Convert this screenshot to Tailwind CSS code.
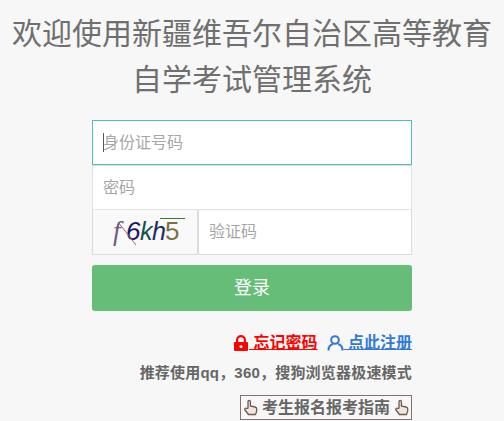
<!DOCTYPE html>
<html lang="zh-CN">
<head>
  <meta charset="UTF-8" />
  <title>新疆维吾尔自治区高等教育自学考试管理系统</title>
  <script src="https://cdn.jsdelivr.net/npm/@tailwindcss/browser@4"></script>
</head>
<body class="bg-[#f7f7f7] h-[421px] overflow-hidden font-['Liberation_Sans','Noto_Sans_CJK_SC',sans-serif] text-[#676a6c]">
  <h1 class="pt-[11px] text-center text-[30px] leading-[46px] font-normal text-[#6f6f6f]">欢迎使用新疆维吾尔自治区高等教育<br>自学考试管理系统</h1>
  <form class="w-[320px] ml-[92px] mt-[17px]">
    <div class="h-[45px] border border-[#4fc0b8] bg-white flex items-center px-[10px] text-base text-[#a6a6a6]">
      <span class="w-px h-[19px] bg-[#555] -mr-px"></span>身份证号码
    </div>
    <div class="h-[45px] border border-[#e2e2e2] border-t-[#dedede] bg-white flex items-center px-[10px] text-base text-[#a6a6a6]">密码</div>
    <div class="h-[45px] flex border border-[#dcdcdc] border-t-0">
      <div class="w-[106px] bg-[#f9f9f9] border-r-2 border-[#dcdcdc]">
        <svg width="104" height="44" viewBox="0 0 104 44">
          <text x="20" y="30" font-family="Liberation Serif" font-style="italic" font-size="27" fill="#6d5a82">f</text>
          <text x="33" y="30" font-family="Liberation Sans" font-style="italic" font-size="26" fill="#1c1566">6</text>
          <text x="47" y="30" font-family="Liberation Sans" font-style="italic" font-size="25" fill="#17504a">k</text>
          <text x="59" y="30" font-family="Liberation Sans" font-style="italic" font-size="25" fill="#1d2a66">h</text>
          <text x="72" y="30" font-family="Liberation Sans" font-size="26" fill="#7d7240">5</text>
          <path d="M67 8.500h25" stroke="#2e7d32" />
          <path d="M25 12 43 35" stroke="#a0606a" />
        </svg>
      </div>
      <div class="flex-1 bg-white flex items-center px-[10px] text-base text-[#a6a6a6]">验证码</div>
    </div>
    <button type="button" class="mt-[10px] w-full h-[46px] rounded-[3px] bg-[#65bd77] text-white text-lg">登录</button>
    <div class="mt-[22px] flex justify-end items-center gap-[9px] h-[20px] text-base font-bold">
      <a class="flex items-center text-[#ff0000] underline">
        <svg width="16" height="16" viewBox="0 0 16 16" fill="#ff0000"><path d="M3 7V5a5 5 0 0 1 10 0v2h1a1 1 0 0 1 1 1v7a1 1 0 0 1-1 1H2a1 1 0 0 1-1-1V8a1 1 0 0 1 1-1zm2.200 0h5.600V5a2.800 2.800 0 0 0-5.600 0z"/><circle cx="8" cy="11.500" r="1.500" fill="#f7f7f7"/></svg>
        <span class="whitespace-pre"> 忘记密码</span>
      </a>
      <a class="flex items-center text-[#337ad7] underline">
        <svg width="17" height="16" viewBox="0 0 17 16" fill="none" stroke="#337ad7" stroke-width="2"><circle cx="8" cy="5" r="3.800"/><path d="M1.500 15.500c0-4 2.500-6 4.500-6.500M15.500 15.500c0-4-2.500-6-4.500-6.500"/></svg>
        <span class="whitespace-pre"> 点此注册</span>
      </a>
    </div>
    <p class="mt-[10px] text-right text-[15px] tracking-[0.2px] leading-[20px] font-bold text-[#666]">推荐使用qq，360，搜狗浏览器极速模式</p>
    <div class="mt-[12px] flex justify-end">
      <a class="h-[25px] w-[172px] border border-[#8a6d6d] flex items-center justify-center gap-[4px] text-base font-bold text-[#666]">
        <svg width="15" height="17" viewBox="0 0 15 17" fill="#f2e6dc" stroke="#6b5a52" stroke-width="1.300"><path d="M5 9V2.500a1.200 1.200 0 0 1 2.400 0V7l4.600 1c1.200.3 1.800 1 1.800 2.200 0 2.500-.5 3.800-1.300 5.300H5.500L2 11c-.9-1.100.6-2.500 1.700-1.500z"/></svg>
        考生报名报考指南
        <svg width="15" height="17" viewBox="0 0 15 17" fill="#f2e6dc" stroke="#6b5a52" stroke-width="1.300"><path d="M5 9V2.500a1.200 1.200 0 0 1 2.400 0V7l4.600 1c1.200.3 1.800 1 1.800 2.200 0 2.500-.5 3.800-1.300 5.300H5.500L2 11c-.9-1.100.6-2.500 1.700-1.500z"/></svg>
      </a>
    </div>
  </form>
</body>
</html>
